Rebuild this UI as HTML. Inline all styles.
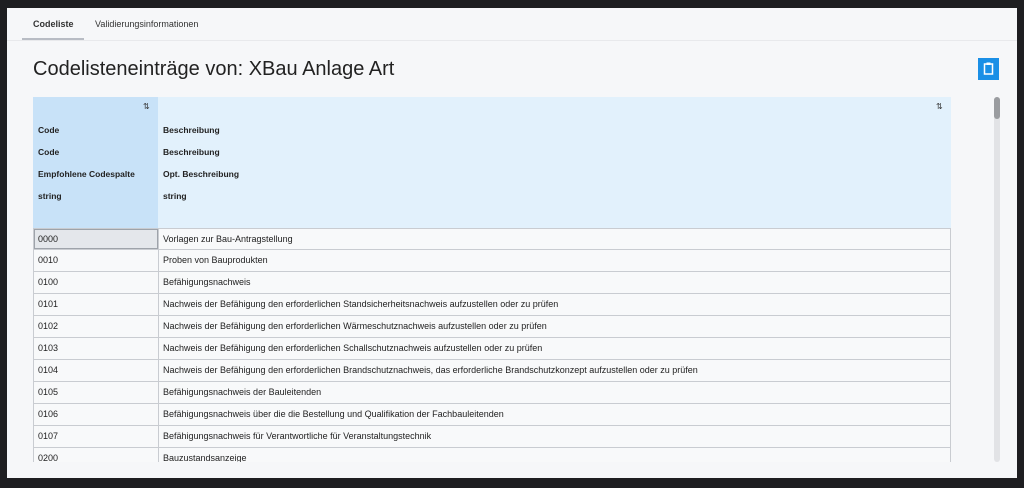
<!DOCTYPE html>
<html><head><meta charset="utf-8"><style>
body{margin:0;width:1024px;height:488px;background:#1e1e21;overflow:hidden;font-family:"Liberation Sans",sans-serif;}
.panel{position:absolute;left:7px;top:8px;width:1010px;height:470px;background:#f6f7f9;overflow:hidden;}
.tabs{position:absolute;left:0;top:0;width:1010px;height:32px;border-bottom:1px solid #e8e9ec;}
.tab{position:absolute;top:11px;font-size:9px;color:#333;}
.ul{position:absolute;left:15px;top:30px;width:62px;height:2px;background:#b8bcc4;}
h1{position:absolute;left:26px;top:50px;margin:0;font-size:20px;font-weight:normal;color:#222;}
.btn{position:absolute;left:971px;top:50px;width:21px;height:22px;background:#1a8fe6;}
.tbl{position:absolute;left:26px;top:89px;width:918px;height:365px;overflow:hidden;}
.h1c{position:absolute;left:0;top:0;width:125px;height:131px;background:#c8e2f8;}
.h2c{position:absolute;left:125px;top:0;width:793px;height:131px;background:#e2f1fc;}
.ht{position:absolute;font-size:8.5px;font-weight:bold;color:#222;line-height:22px;left:5px;top:22px;}
.sort{position:absolute;top:5px;font-size:8px;color:#333;}
.row{position:absolute;left:0;box-sizing:border-box;width:918px;height:22px;border:1px solid #c9ccd1;border-top:none;background:#f8f9fa;font-size:9px;color:#222;line-height:21px;}
.row .c1{position:absolute;left:4px;}
.row .c2{position:absolute;left:129px;}
.row .sep{position:absolute;left:124px;top:0;width:1px;height:22px;background:#c9ccd1;}
.sb{position:absolute;left:987px;top:89px;width:6px;height:365px;background:#e2e3e6;border-radius:3px;}
.th{position:absolute;left:987px;top:89px;width:6px;height:22px;background:#9a9ca0;border-radius:3px;}
</style></head><body>
<div class="panel">
<div class="tabs"><div class="tab" style="left:26px;font-weight:bold">Codeliste</div><div class="tab" style="left:88px">Validierungsinformationen</div><div class="ul"></div></div>
<h1>Codelisteneinträge von: XBau Anlage Art</h1>
<div class="btn"><svg width="21" height="22" viewBox="0 0 21 22"><rect x="6.5" y="6" width="8" height="10" fill="none" stroke="#fff" stroke-width="1.5"/><rect x="8.5" y="4.5" width="4" height="2.5" fill="#fff"/></svg></div>
<div class="tbl">
<div class="h1c"><span class="sort" style="left:110px">⇅</span><div class="ht">Code<br>Code<br>Empfohlene Codespalte<br>string</div></div>
<div class="h2c"><span class="sort" style="left:778px">⇅</span><div class="ht">Beschreibung<br>Beschreibung<br>Opt. Beschreibung<br>string</div></div>
<div class="row" style="top:131px;border-top:1px solid #c9ccd1;line-height:20px"><div style="position:absolute;left:0;top:0;width:124px;height:20px;background:#e4e7eb;box-shadow:inset 0 0 0 1px #9ea3aa"></div><div class="sep"></div><span class="c1">0000</span><span class="c2">Vorlagen zur Bau-Antragstellung</span></div>
<div class="row" style="top:153px"><div class="sep"></div><span class="c1">0010</span><span class="c2">Proben von Bauprodukten</span></div>
<div class="row" style="top:175px"><div class="sep"></div><span class="c1">0100</span><span class="c2">Befähigungsnachweis</span></div>
<div class="row" style="top:197px"><div class="sep"></div><span class="c1">0101</span><span class="c2">Nachweis der Befähigung den erforderlichen Standsicherheitsnachweis aufzustellen oder zu prüfen</span></div>
<div class="row" style="top:219px"><div class="sep"></div><span class="c1">0102</span><span class="c2">Nachweis der Befähigung den erforderlichen Wärmeschutznachweis aufzustellen oder zu prüfen</span></div>
<div class="row" style="top:241px"><div class="sep"></div><span class="c1">0103</span><span class="c2">Nachweis der Befähigung den erforderlichen Schallschutznachweis aufzustellen oder zu prüfen</span></div>
<div class="row" style="top:263px"><div class="sep"></div><span class="c1">0104</span><span class="c2">Nachweis der Befähigung den erforderlichen Brandschutznachweis, das erforderliche Brandschutzkonzept aufzustellen oder zu prüfen</span></div>
<div class="row" style="top:285px"><div class="sep"></div><span class="c1">0105</span><span class="c2">Befähigungsnachweis der Bauleitenden</span></div>
<div class="row" style="top:307px"><div class="sep"></div><span class="c1">0106</span><span class="c2">Befähigungsnachweis über die die Bestellung und Qualifikation der Fachbauleitenden</span></div>
<div class="row" style="top:329px"><div class="sep"></div><span class="c1">0107</span><span class="c2">Befähigungsnachweis für Verantwortliche für Veranstaltungstechnik</span></div>
<div class="row" style="top:351px"><div class="sep"></div><span class="c1">0200</span><span class="c2">Bauzustandsanzeige</span></div>
</div>
<div class="sb"></div><div class="th"></div>
</div>
</body></html>
